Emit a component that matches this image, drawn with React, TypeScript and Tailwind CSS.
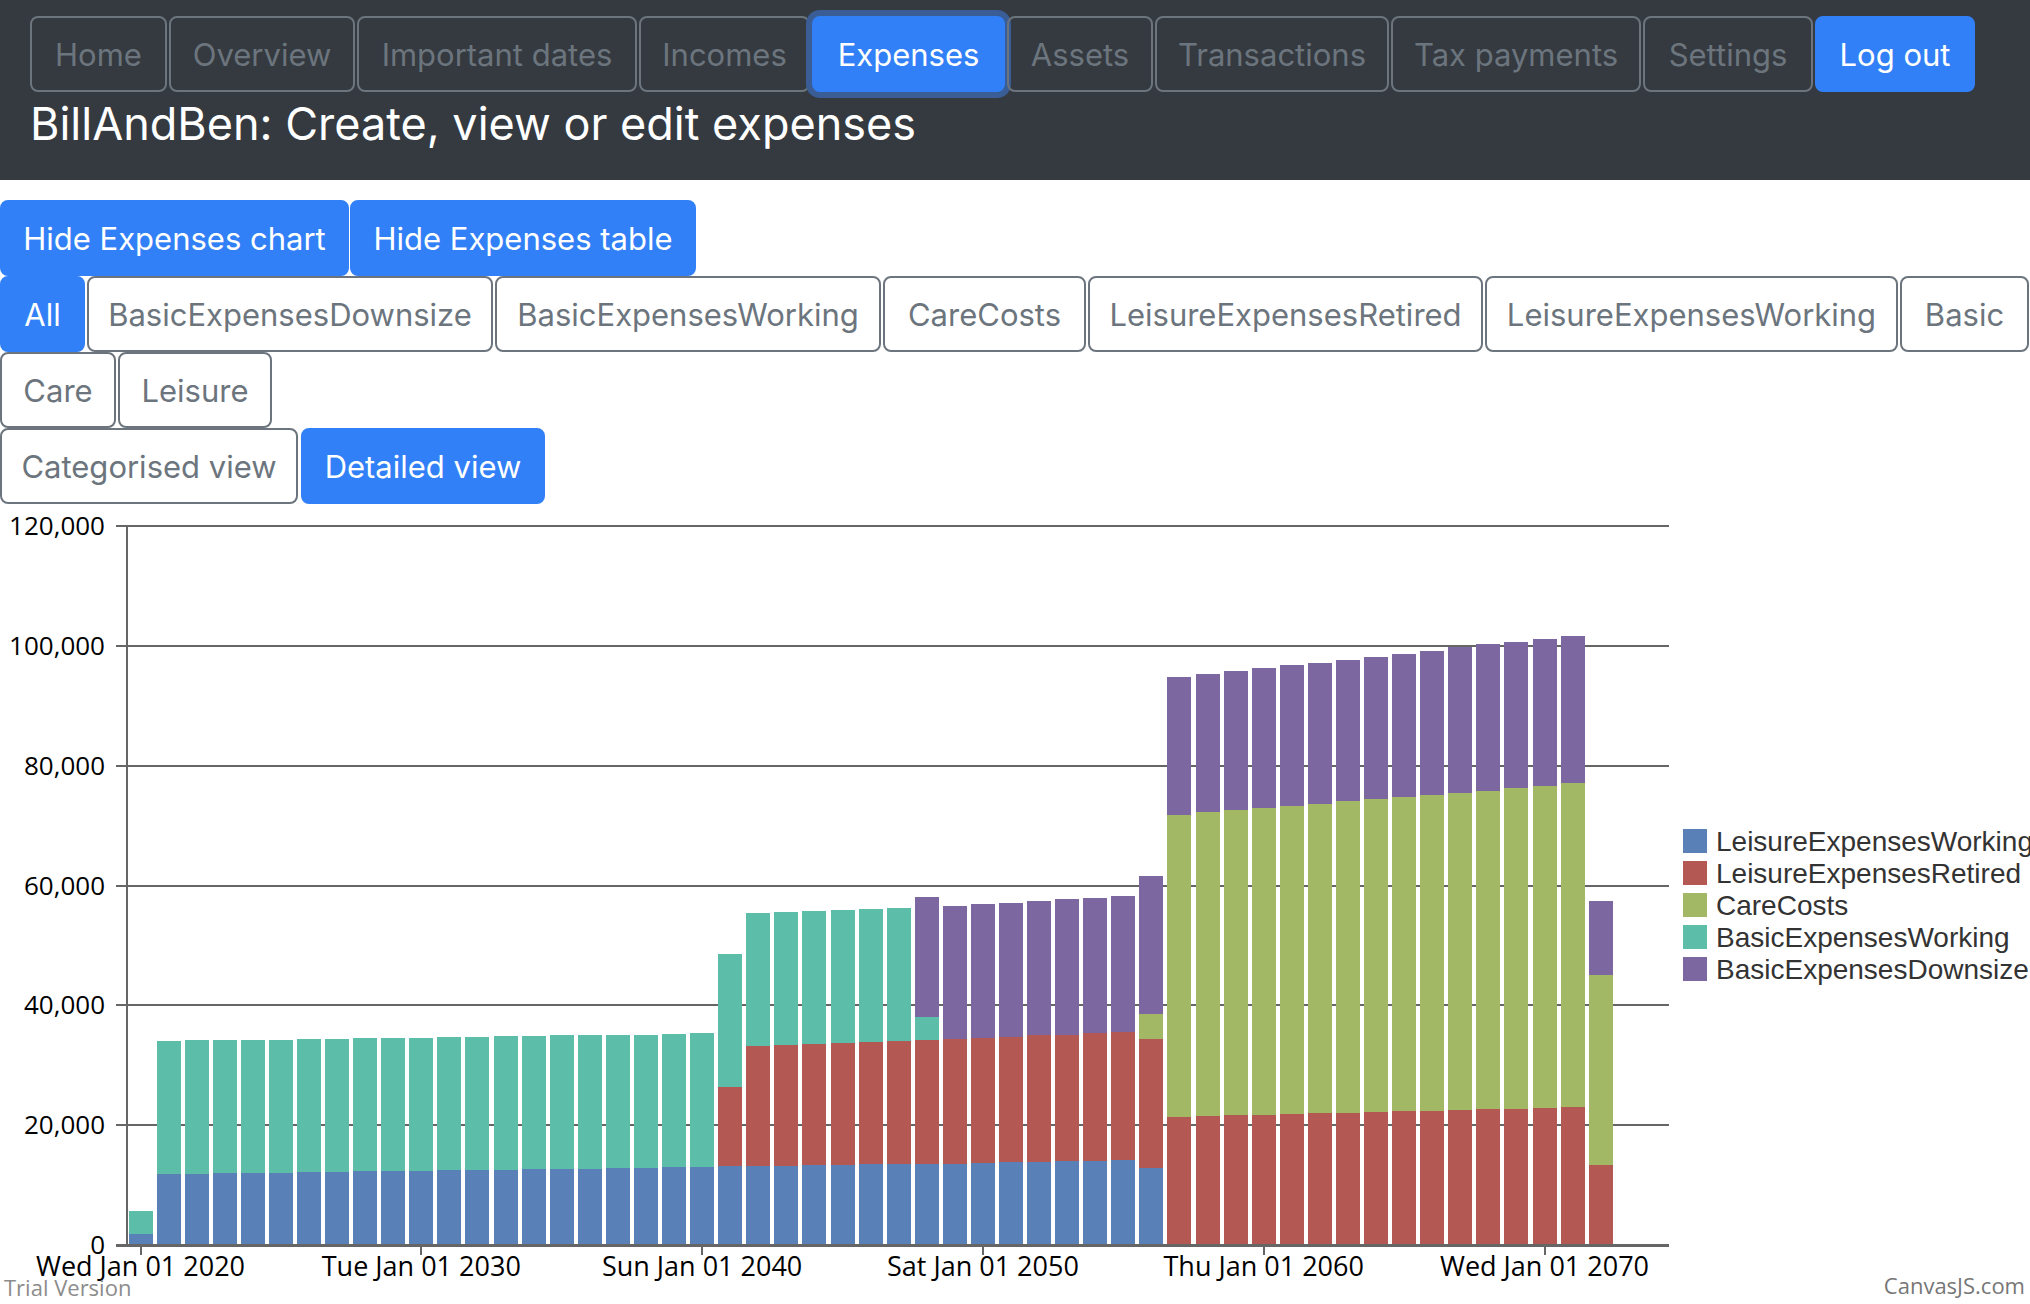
import React from "react";

type Btn = { label: string; w: string; primary?: boolean; focus?: boolean };

const navItems: Btn[] = [
  { label: "Home", w: "w-[137px]" },
  { label: "Overview", w: "w-[186px]" },
  { label: "Important dates", w: "w-[280px]" },
  { label: "Incomes", w: "w-[171px]" },
  { label: "Expenses", w: "w-[193px]", primary: true, focus: true },
  { label: "Assets", w: "w-[146px]" },
  { label: "Transactions", w: "w-[234px]" },
  { label: "Tax payments", w: "w-[250px]" },
  { label: "Settings", w: "w-[170px]" },
  { label: "Log out", w: "w-[160px]", primary: true },
];

const filterItems: Btn[] = [
  { label: "All", w: "w-[85px]", primary: true },
  { label: "BasicExpensesDownsize", w: "w-[406px]" },
  { label: "BasicExpensesWorking", w: "w-[386px]" },
  { label: "CareCosts", w: "w-[203px]" },
  { label: "LeisureExpensesRetired", w: "w-[395px]" },
  { label: "LeisureExpensesWorking", w: "w-[413px]" },
  { label: "Basic", w: "w-[129px]" },
  { label: "Care", w: "w-[116px]" },
  { label: "Leisure", w: "w-[154px]" },
];

// stacked series, bottom to top
const series = [
  { name: "LeisureExpensesWorking", color: "#5a80b8" },
  { name: "LeisureExpensesRetired", color: "#b35853" },
  { name: "CareCosts", color: "#a3b865" },
  { name: "BasicExpensesWorking", color: "#5cbda9" },
  { name: "BasicExpensesDownsize", color: "#7c67a0" },
];

// [year, leisureWorking, leisureRetired, care, basicWorking, basicDownsize]
const rows: number[][] = [
  [2020, 1893, 0, 0, 3715, 0],
  [2021, 11917, 0, 0, 22152, 0],
  [2022, 11917, 0, 0, 22222, 0],
  [2023, 11987, 0, 0, 22222, 0],
  [2024, 12057, 0, 0, 22222, 0],
  [2025, 12057, 0, 0, 22222, 0],
  [2026, 12127, 0, 0, 22222, 0],
  [2027, 12197, 0, 0, 22222, 0],
  [2028, 12268, 0, 0, 22221, 0],
  [2029, 12408, 0, 0, 22151, 0],
  [2030, 12408, 0, 0, 22221, 0],
  [2031, 12478, 0, 0, 22222, 0],
  [2032, 12548, 0, 0, 22222, 0],
  [2033, 12548, 0, 0, 22292, 0],
  [2034, 12688, 0, 0, 22222, 0],
  [2035, 12758, 0, 0, 22222, 0],
  [2036, 12758, 0, 0, 22222, 0],
  [2037, 12828, 0, 0, 22222, 0],
  [2038, 12828, 0, 0, 22292, 0],
  [2039, 12969, 0, 0, 22221, 0],
  [2040, 12969, 0, 0, 22361, 0],
  [2041, 13109, 13179, 0, 22291, 0],
  [2042, 13249, 19908, 0, 22222, 0],
  [2043, 13249, 20119, 0, 22221, 0],
  [2044, 13319, 20259, 0, 22152, 0],
  [2045, 13389, 20329, 0, 22152, 0],
  [2046, 13459, 20399, 0, 22222, 0],
  [2047, 13529, 20540, 0, 22151, 0],
  [2048, 13529, 20680, 0, 3785, 20119],
  [2049, 13599, 20750, 0, 0, 22222],
  [2050, 13740, 20819, 0, 0, 22292],
  [2051, 13810, 20960, 0, 0, 22362],
  [2052, 13880, 21100, 0, 0, 22432],
  [2053, 13950, 21170, 0, 0, 22572],
  [2054, 14090, 21240, 0, 0, 22643],
  [2055, 14160, 21311, 0, 0, 22782],
  [2056, 12898, 21521, 4206, 0, 22923],
  [2057, 0, 21381, 50401, 0, 23063],
  [2058, 0, 21521, 50682, 0, 23063],
  [2059, 0, 21661, 50893, 0, 23203],
  [2060, 0, 21731, 51243, 0, 23273],
  [2061, 0, 21871, 51384, 0, 23483],
  [2062, 0, 22011, 51594, 0, 23554],
  [2063, 0, 22082, 51944, 0, 23693],
  [2064, 0, 22222, 52154, 0, 23834],
  [2065, 0, 22292, 52505, 0, 23904],
  [2066, 0, 22362, 52715, 0, 24115],
  [2067, 0, 22572, 52926, 0, 24324],
  [2068, 0, 22642, 53206, 0, 24395],
  [2069, 0, 22712, 53557, 0, 24395],
  [2070, 0, 22853, 53766, 0, 24535],
  [2071, 0, 22993, 54047, 0, 24675],
  [2072, 0, 13389, 31615, 0, 12408],
];

const tickDays = ["Wed", "Tue", "Sun", "Sat", "Thu", "Wed"];

const PLOT_TOP = 22;
const ZERO_Y = 741;
const AXIS_X = 127;
const RIGHT_X = 1669;
const Y_MAX = 120000;
const yearX = (year: number) => 140.5 + (year - 2020) * 28.08;
const valH = (v: number) => (v / Y_MAX) * (ZERO_Y - PLOT_TOP);

const Button: React.FC<{ item: Btn; dark?: boolean }> = ({ item, dark }) => (
  <button
    className={`${item.w} h-[76px] shrink-0 rounded-lg border-2 text-[31px] leading-none ${
      item.primary
        ? "border-[#3180f7] bg-[#3180f7] text-white"
        : "border-[#6c757d] text-[#6c757d] " + (dark ? "bg-transparent" : "bg-white")
    } ${item.focus ? "ring-[6px] ring-[#3b5d95]" : ""}`}
  >
    {item.label}
  </button>
);

const ExpensesChart: React.FC = () => {
  const gridValues = [120000, 100000, 80000, 60000, 40000, 20000];
  return (
    <svg width={2030} height={801} shapeRendering="crispEdges">
      {gridValues.map((v) => {
        const y = ZERO_Y - valH(v);
        return <line key={v} x1={116} x2={RIGHT_X} y1={y} y2={y} stroke="#666" strokeWidth={2} />;
      })}

      {rows.map((r) => {
        const x = yearX(r[0]) - 12;
        let acc = 0;
        return (
          <g key={r[0]}>
            {series.map((s, i) => {
              const v = r[i + 1];
              if (!v) return null;
              const y0 = ZERO_Y - valH(acc);
              acc += v;
              const y1 = ZERO_Y - valH(acc);
              return <rect key={s.name} x={x} y={y1} width={24} height={y0 - y1} fill={s.color} />;
            })}
          </g>
        );
      })}

      <line x1={AXIS_X} x2={AXIS_X} y1={PLOT_TOP - 1} y2={ZERO_Y} stroke="#666" strokeWidth={2} />
      <line x1={116} x2={RIGHT_X} y1={ZERO_Y} y2={ZERO_Y} stroke="#666" strokeWidth={3} />

      {[...gridValues, 0].map((v) => (
        <text
          key={v}
          x={105}
          y={ZERO_Y - valH(v) + 9}
          textAnchor="end"
          fontFamily="'Open Sans', sans-serif"
          fontSize={26}
          fill="#000"
        >
          {v.toLocaleString("en-US")}
        </text>
      ))}

      {tickDays.map((d, i) => {
        const year = 2020 + i * 10;
        const x = yearX(year);
        return (
          <g key={year}>
            <line x1={x} x2={x} y1={ZERO_Y} y2={ZERO_Y + 10} stroke="#666" strokeWidth={2} />
            <text
              x={x}
              y={772}
              textAnchor="middle"
              fontFamily="'Open Sans', sans-serif"
              fontSize={27}
              fill="#000"
            >
              {`${d} Jan 01 ${year}`}
            </text>
          </g>
        );
      })}

      {series.map((s, i) => {
        const cy = 337 + i * 32;
        return (
          <g key={s.name}>
            <rect x={1683} y={cy - 12} width={24} height={24} fill={s.color} />
            <text
              x={1716}
              y={cy + 10}
              fontFamily="'Liberation Sans', Arial, sans-serif"
              fontSize={28}
              fill="#333"
            >
              {s.name}
            </text>
          </g>
        );
      })}

      <text x={4} y={792} fontFamily="'Open Sans', sans-serif" fontSize={22} fill="#8c8c8c">
        Trial Version
      </text>
      <text x={2025} y={790} textAnchor="end" fontFamily="'Open Sans', sans-serif" fontSize={22} fill="#777">
        CanvasJS.com
      </text>
    </svg>
  );
};

export default function App() {
  return (
    <div className="min-h-screen w-[2030px] overflow-hidden bg-white font-['Inter',sans-serif]">
      {/* Header */}
      <div className="h-[180px] bg-[#343a40] px-[30px] pt-4">
        <div className="flex gap-[2px]">
          {navItems.map((item) => (
            <Button key={item.label} item={item} dark />
          ))}
        </div>
        <h1 className="mt-[5px] text-[45px] leading-[54px] font-normal text-white">
          BillAndBen: Create, view or edit expenses
        </h1>
      </div>

      {/* Controls */}
      <div className="mt-5 flex flex-col">
        <div className="flex gap-px">
          <Button item={{ label: "Hide Expenses chart", w: "w-[349px]", primary: true }} />
          <Button item={{ label: "Hide Expenses table", w: "w-[346px]", primary: true }} />
        </div>
        <div className="flex flex-wrap gap-x-[2px]">
          {filterItems.map((item) => (
            <Button key={item.label} item={item} />
          ))}
        </div>
        <div className="flex gap-[3px]">
          <Button item={{ label: "Categorised view", w: "w-[298px]" }} />
          <Button item={{ label: "Detailed view", w: "w-[244px]", primary: true }} />
        </div>
      </div>

      {/* Chart */}
      <ExpensesChart />
    </div>
  );
}
